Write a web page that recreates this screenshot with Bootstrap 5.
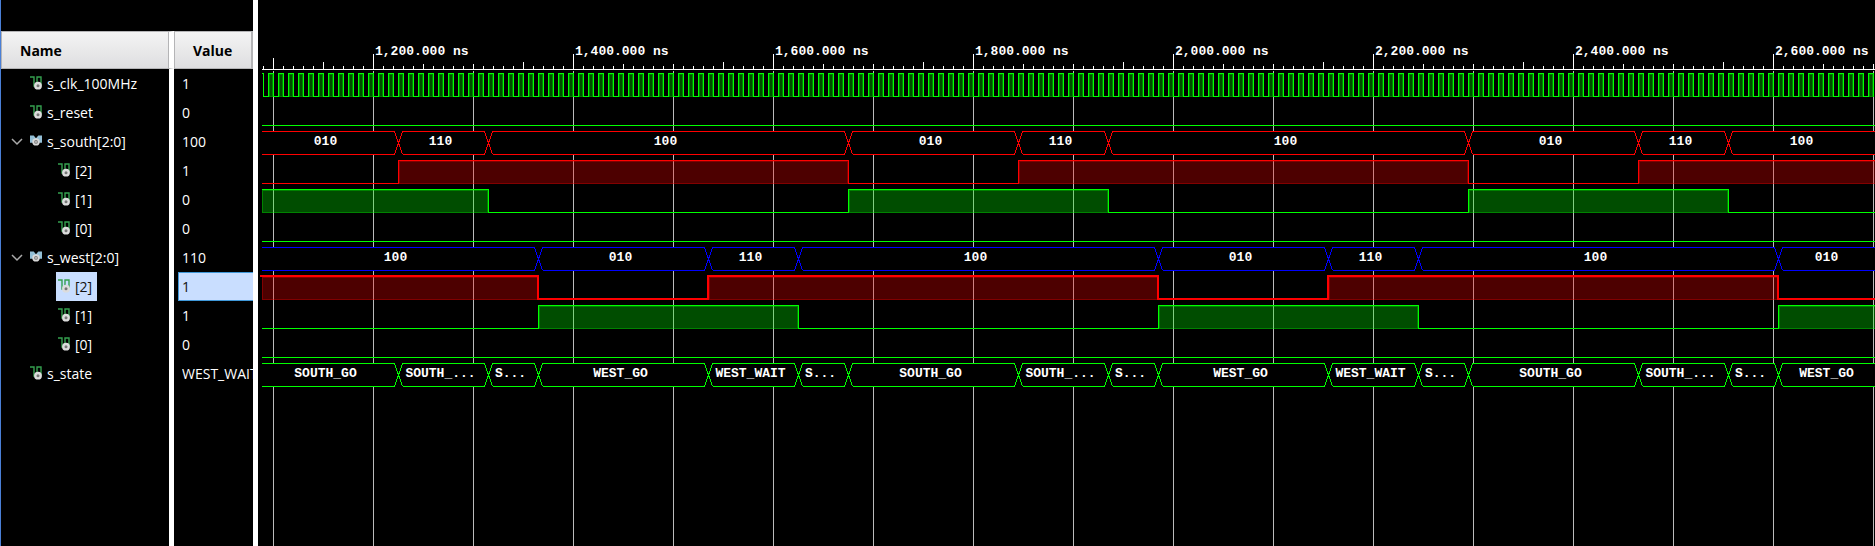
<!DOCTYPE html>
<html lang="en">
<head>
<meta charset="utf-8">
<title>Waveform viewer</title>
<meta name="viewport" content="width=device-width, initial-scale=1">
<link href="https://cdn.jsdelivr.net/npm/bootstrap@5.3.0/dist/css/bootstrap.min.css" rel="stylesheet">
<style>
body { background: #000; font-family: "Open Sans", "Noto Sans", sans-serif; font-size: 14px; line-height: 20px; color: #fff; }
.signal-pane { width: 253px; border-left: 1px solid #4a7fd6; }
.pane-strip { height: 31px; }
.signal-table { table-layout: fixed; width: 252px; border-collapse: separate; border-spacing: 0; }
.signal-table col.name-col { width: 173px; }
.signal-table th { height: 38px; padding: 2px 0 0; font-size: 14px; color: #000; background: linear-gradient(#f4f4f4, #dedee0); border: 1px solid #b4b4b6; box-shadow: inset -1px 0 #b4b4b6; }
.signal-table td { height: 29px; padding: 0; }
.signal-table tr > :first-child { padding-left: 18px; }
.signal-table tr > :nth-child(2) { padding-left: 8px; }
.signal-table thead tr > :nth-child(2) { padding-left: 18px; }
.signal-table tr > :first-child { border-right: 5px solid #fff; }
.signal-table tr.filler td { height: auto; }
.signal-table td.name-cell { padding-left: 8px; }
.signal-name { height: 29px; gap: 4px; }
.signal-name .signal-name { gap: 5px; }
.signal-name.bit { margin-left: 28px; }
.toggle { width: 17px; height: 16px; }
.sig-icon { width: 12px; height: 14px; margin-bottom: 2px; }
.value-text { height: 29px; line-height: 29px; white-space: nowrap; }
.picked .signal-label { color: #111; }
.chosen { background: #c9deff; padding: 0 5px 0 2px; margin-left: -2px; }
.signal-table tr.picked td:nth-child(2) { padding-left: 4px; }
.picked .value-text { background: #c9deff; border: 1px solid #3f98d8; border-right: 0; color: #111; padding-left: 3px; line-height: 27px; }
.wave-pane { border-left: 5px solid #fff; min-width: 0; font-family: "Liberation Mono", monospace; font-weight: 700; font-size: 13px; line-height: 16px; }
.time-axis { padding-top: 44px; }
.time-label { width: 200px; padding-left: 2px; white-space: nowrap; }
.time-label span { display: inline-block; background: #000; padding: 0 6px 4px 0; }
.bus-labels { height: 29px; padding-top: 7px; }
.bus-text { white-space: nowrap; overflow: hidden; padding-right: 5px; }
.bus-text:last-child { padding-right: 0; }
.axis-space { height: 69px; }
</style>
</head>
<body class="vh-100 overflow-hidden">
<svg class="d-none" aria-hidden="true">
  <symbol id="wire" viewBox="0 0 12 14">
    <path d="M0 1h4v9h3V1h4v8" fill="none" stroke="#35a04f" stroke-width="1.4"/>
    <circle cx="8" cy="9.700" r="3.900" fill="#dcdcdc"/><circle cx="8" cy="9.700" r="1.500" fill="#777"/>
  </symbol>
  <symbol id="bus" viewBox="0 0 13 14">
    <path d="M0 1h4l2.500 3L9 1h4v8H0z" fill="#93bfd6"/>
    <circle cx="6.500" cy="8" r="4" fill="#d9d9d9"/><circle cx="6.500" cy="8" r="2" fill="#777"/><circle cx="6.500" cy="8" r="1" fill="#ccc"/>
  </symbol>
</svg>
<main class="d-flex h-100">
  <section class="signal-pane d-flex flex-column flex-shrink-0 h-100 overflow-hidden" aria-label="Signals">
    <div class="pane-strip flex-shrink-0"></div>
    <div class="flex-fill">
      <table class="signal-table h-100">
        <colgroup><col class="name-col"><col></colgroup>
        <thead><tr><th scope="col">Name</th><th scope="col">Value</th></tr></thead>
        <tbody id="signals"></tbody>
      </table>
    </div>
  </section>
  <section class="wave-pane flex-fill position-relative overflow-hidden" aria-label="Waveforms">
    <svg id="plot" class="position-absolute top-0 start-0 w-100 h-100" shape-rendering="crispEdges"></svg>
    <div id="times" class="time-axis position-absolute top-0 start-0 d-flex"></div>
    <div id="labels" class="position-relative"></div>
  </section>
</main>
<script src="https://cdn.jsdelivr.net/npm/bootstrap@5.3.0/dist/js/bootstrap.bundle.min.js"></script>
<script>
const GREEN = '#00ff00', RED = '#ff0000', BLUE = '#0000ff';
const START = 1088, END = 6000, ORIGIN = 1085;
const HEAD = 69, ROW = 29;

// One cycle of the traffic light: [duration in ns, state, south, west]
const cycle = [[170,'SOUTH_GO','010','100'],[90,'SOUTH_WAIT','110','100'],[50,'STOP_SOUTH','100','100'],
               [170,'WEST_GO','100','010'],[90,'WEST_WAIT','100','110'],[50,'STOP_WEST','100','100']];
const steps = [];
for (let t = 1055, i = 0; t < END; i++) {
  const [d, state, south, west] = cycle[i % 6];
  steps.push({ from: Math.max(t, START), to: t + d, state, south, west });
  t += d;
}
function track(pick) {
  const out = [];
  for (const s of steps) {
    const v = pick(s), last = out[out.length - 1];
    if (last && last.v === v) last.to = s.to; else out.push({ from: s.from, to: s.to, v });
  }
  return out;
}
const signals = [
  { name: 's_clk_100MHz', value: '1', clock: true, color: GREEN },
  { name: 's_reset', value: '0', color: GREEN, data: track(() => '0') },
  { name: 's_south[2:0]', value: '100', bus: true, open: true, color: RED, data: track(s => s.south) },
  { name: '[2]', value: '1', bit: true, color: RED, data: track(s => s.south[0]) },
  { name: '[1]', value: '0', bit: true, color: GREEN, data: track(s => s.south[1]) },
  { name: '[0]', value: '0', bit: true, color: GREEN, data: track(s => s.south[2]) },
  { name: 's_west[2:0]', value: '110', bus: true, open: true, color: BLUE, data: track(s => s.west) },
  { name: '[2]', value: '1', bit: true, picked: true, color: RED, data: track(s => s.west[0]) },
  { name: '[1]', value: '1', bit: true, color: GREEN, data: track(s => s.west[1]) },
  { name: '[0]', value: '0', bit: true, color: GREEN, data: track(s => s.west[2]) },
  { name: 's_state', value: 'WEST_WAIT', bus: true, color: GREEN, data: track(s => s.state) }
];

document.getElementById('signals').innerHTML = signals.map(s => `
  <tr class="${s.picked ? 'picked' : ''}"><td class="name-cell"><div class="signal-name d-flex align-items-center ${s.bit ? 'bit' : ''}">
    ${s.open ? `<button type="button" class="toggle btn p-0 border-0 d-flex align-items-center" aria-label="Collapse ${s.name}"><svg width="14" height="10" fill="none" stroke="#aaa" stroke-width="1.5"><path d="M3 2l5 5 5-5"/></svg></button>` : '<span class="toggle"></span>'}
    <span class="signal-name ${s.picked ? 'chosen' : ''} d-flex align-items-center"><svg class="sig-icon" aria-hidden="true"><use href="#${s.open ? 'bus' : 'wire'}"/></svg><span class="signal-label">${s.name}</span></span>
  </div></td><td><div class="value-text overflow-hidden">${s.value}</div></td></tr>`).join('') +
  '<tr class="filler"><td></td><td></td></tr>';

const px = t => t - ORIGIN;

function levelShape(s, top, width) {
  const hi = top + 4, lo = top + 27;
  let line = '', fills = '';
  s.data.forEach((d, i) => {
    const a = px(d.from), b = Math.min(px(d.to), width + 10), y = d.v === '1' ? hi : lo;
    if (a > width) return;
    line += `${i ? 'L' : 'M'}${a} ${y}H${b}`;
    if (d.v === '1') {
      const x = i ? a : a + 1;
      fills += `<rect x="${x}" y="${hi}" width="${b - x + 1}" height="24" fill="${s.color}" fill-opacity=".3"/>
        <path transform="translate(.5 .5)" d="M${x + (i ? 1 : 0)} ${lo}V${hi + 1}H${b - 1}V${lo}z" fill="none" stroke="${s.color}" stroke-opacity=".3"/>`;
    }
  });
  return fills + (s.picked
    ? `<path d="${line}" fill="none" stroke="${s.color}" stroke-width="2" stroke-linecap="square"/>`
    : `<path transform="translate(.5 .5)" d="${line}" fill="none" stroke="${s.color}"/>`);
}

function clockShape(s, top, width) {
  const hi = top + 4, lo = top + 27;
  let line = `M3 ${hi}H5V${lo}`, fill = '';
  for (let x = 10; x < width; x += 10) {
    line += `H${x}V${hi}H${x + 5}V${lo}`;
    fill += `M${x + 1} ${hi + 1}h4v22h-4z`;
  }
  return `<path d="${fill}" fill="#004c00"/><path transform="translate(.5 .5)" d="${fill.replace(/h4v22h-4/g, 'h3v22h-3')}" fill="none" stroke="#008200"/>
    <path transform="translate(.5 .5)" d="${line}" fill="none" stroke="${s.color}"/>`;
}

function busShape(s, top, width) {
  const hi = top + 4, lo = top + 27;
  let line = '';
  s.data.forEach((d, i) => {
    const a = px(d.from), b = px(d.to);
    if (a > width) return;
    const l = i ? a + 4 : a;
    line += `M${l} ${hi}H${b - 4}L${b + 4} ${lo}M${l} ${lo}H${b - 4}L${b + 4} ${hi}`;
  });
  return `<rect x="3" y="${hi}" width="${width}" height="24"/><path transform="translate(.5 .5)" d="${line}" fill="none" stroke="${s.color}"/>`;
}

// Shorten a value that does not fit between its two transitions
function clip(text, room) {
  const max = Math.floor((room - 16) / 8);
  return text.length <= max ? text : text.slice(0, Math.max(1, max - 3)) + '...';
}

function render() {
  const plot = document.getElementById('plot'), width = plot.parentElement.clientWidth;
  let grid = '', ticks = 'M3 69H' + width;
  for (let x = 5; x < width; x += 10) {
    const n = x + ORIGIN;
    const y = n % 200 === 0 ? 53 : n % 100 === 0 ? 57 : n % 50 === 0 ? 61 : 65;
    ticks += `M${x} 69V${y}`;
    if (n % 100 === 0) grid += `M${x} ${HEAD + 1}V4000`;
  }
  plot.innerHTML = `<path transform="translate(.5 .5)" d="${grid}" stroke="#bbb"/><path transform="translate(.5 .5)" d="${ticks}" stroke="#fff"/>` +
    signals.map((s, i) => (s.clock ? clockShape : s.bus ? busShape : levelShape)(s, HEAD + i * ROW, width)).join('');

  let times = `<div class="flex-shrink-0" style="width:${px(1200)}px"></div>`;
  for (let t = 1200; px(t) < width; t += 200)
    times += `<div class="time-label flex-shrink-0"><span>${t.toLocaleString('en-US')}.000 ns</span></div>`;
  document.getElementById('times').innerHTML = times;

  document.getElementById('labels').innerHTML = '<div class="axis-space"></div>' + signals.map(s => {
    let cells = '';
    if (s.bus) s.data.forEach((d, i) => {
      const a = i ? px(d.from) : 0, b = Math.min(px(d.to), width);
      if (a < width) cells += `<div class="bus-text text-center flex-shrink-0" style="width:${b - a}px">${clip(d.v, px(d.to) - a)}</div>`;
    });
    return `<div class="bus-labels d-flex">${cells}</div>`;
  }).join('');
}
render();
addEventListener('resize', render);
</script>
</body>
</html>
